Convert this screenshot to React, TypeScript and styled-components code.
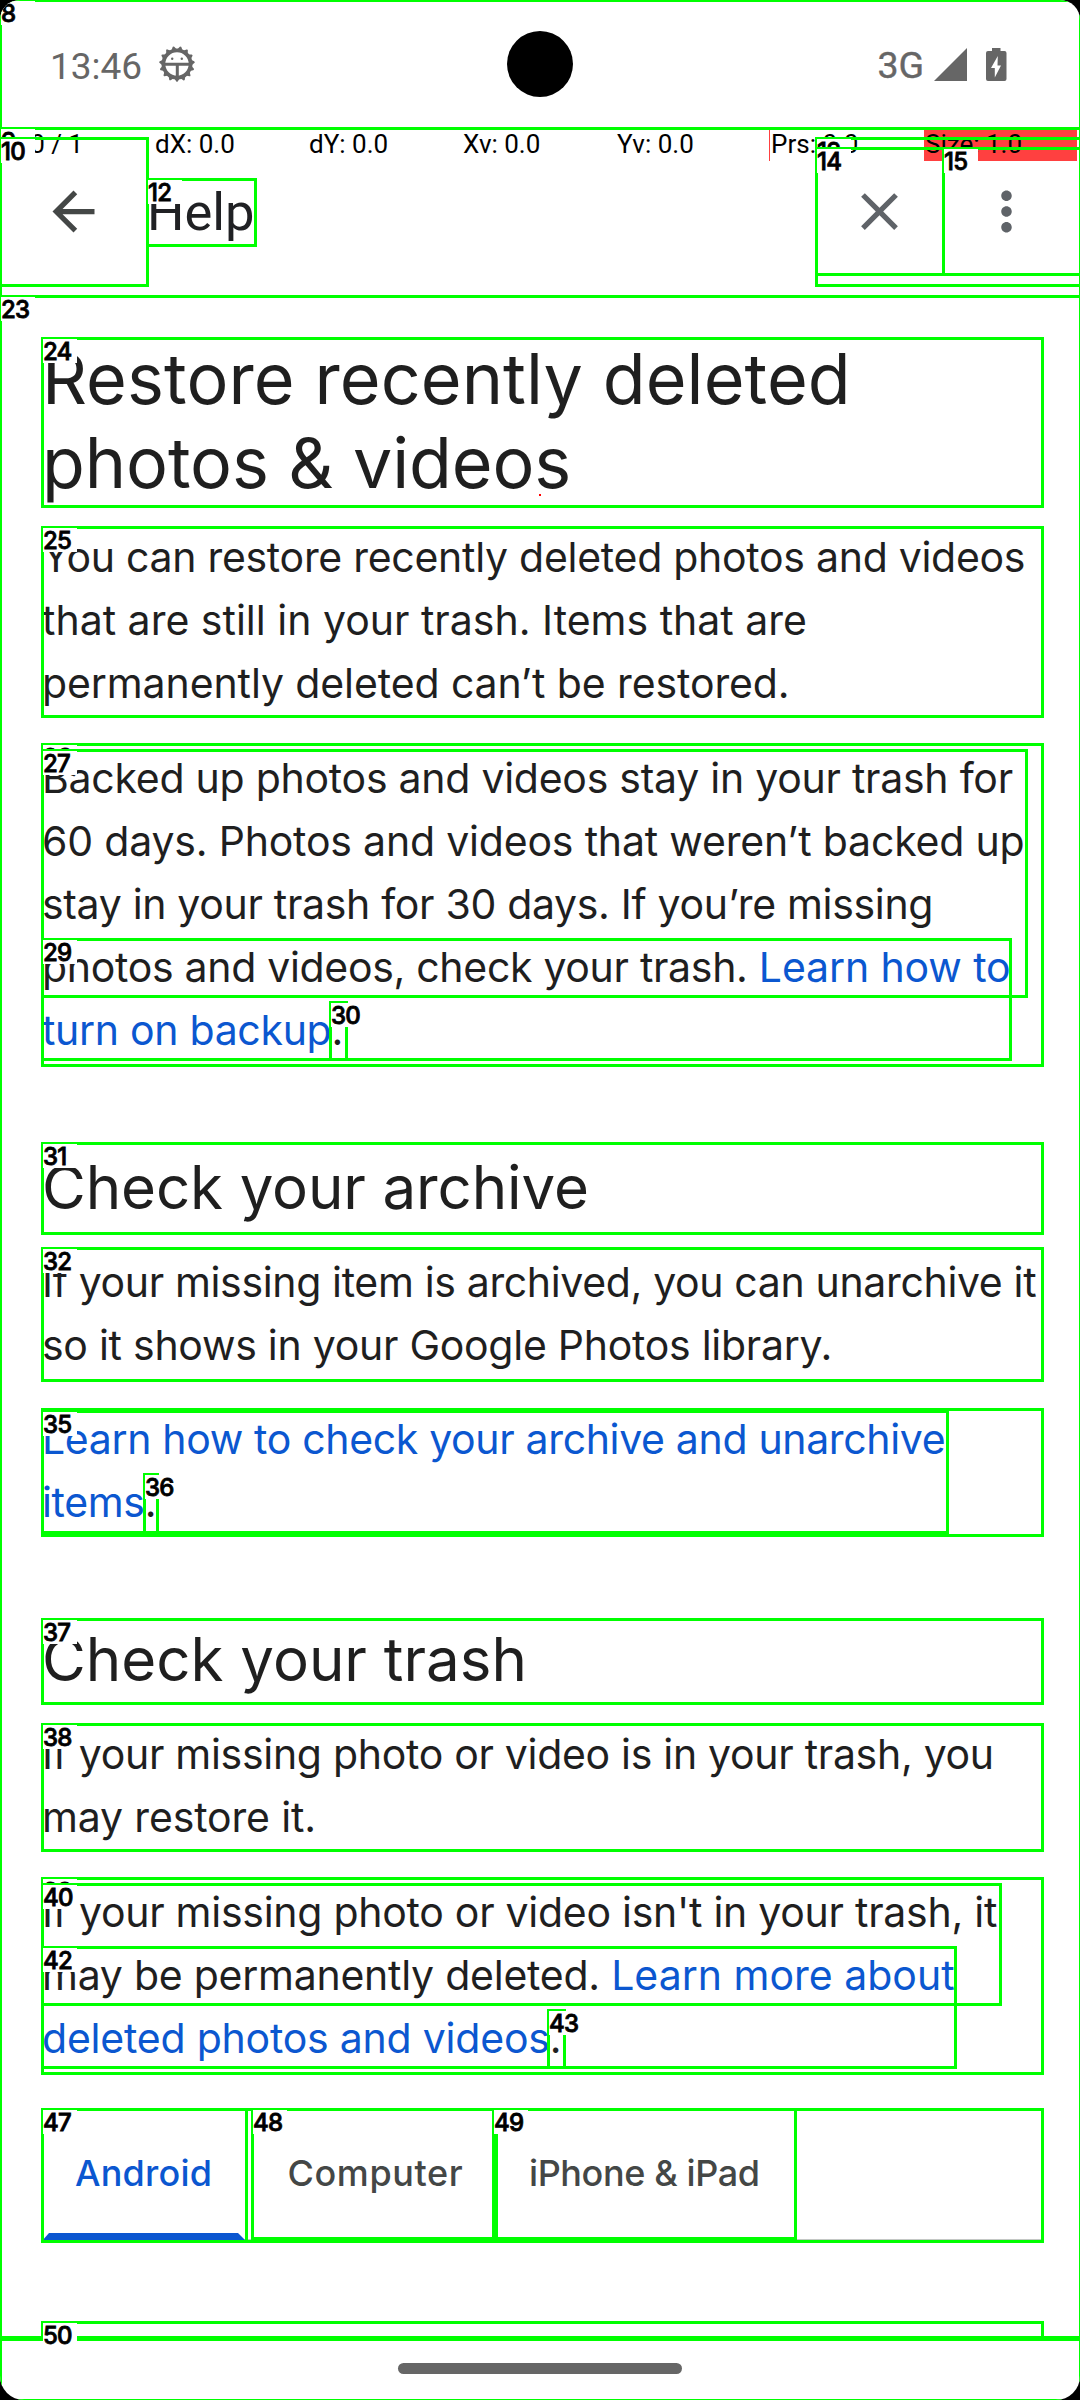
import React from "react";
import styled, { createGlobalStyle } from "styled-components";

const GlobalStyle = createGlobalStyle`
  * { box-sizing: border-box; }
  body { margin: 0; background: #000; }
  h1, h2, p { margin: 0; font-weight: 400; }
`;

const Phone = styled.div`
  position: relative;
  display: flex;
  flex-direction: column;
  width: 1080px;
  height: 2400px;
  overflow: hidden;
  background: #fff;
  border-radius: 20px 20px 24px 24px;
  font-family: Inter, "Open Sans", sans-serif;
  color: #1f1f1f;
`;

/* Status bar */
const StatusBar = styled.header`
  display: grid;
  flex: none;
  grid-template-columns: 1fr 66px 1fr;
  align-items: center;
  height: 128px;
  color: #666;
  font-family: Roboto, sans-serif;
`;

const StatusSide = styled.div<{ $end?: boolean }>`
  display: flex;
  justify-content: ${(p) => (p.$end ? "flex-end" : "flex-start")};
  padding: ${(p) => (p.$end ? "0 73px 0 0" : "0 0 0 50px")};
`;

const StatusGroup = styled.div<{ $gap: number }>`
  display: flex;
  align-items: center;
  gap: ${(p) => p.$gap}px;
`;

const Clock = styled.span`
  width: 92px;
  padding-top: 5px;
  font-size: 37px;
  line-height: 44px;
  white-space: nowrap;
`;

const Network = styled.span`
  padding-top: 2px;
  font-size: 37.5px;
  font-weight: 450;
  line-height: 44px;
  -webkit-text-stroke: 0.4px #666;
`;

const PunchHole = styled.div`
  width: 66px;
  height: 66px;
  border-radius: 50%;
  background: #000;
`;

/* Pointer read-out drawn over the top of the window */
const PointerBar = styled.div`
  position: absolute;
  top: 128px;
  left: 0;
  display: grid;
  grid-template-columns: repeat(7, 154px);
  height: 32px;
  color: #000;
  font-family: Roboto, sans-serif;
  font-size: 26px;
  line-height: 33px;
`;

const PointerCell = styled.span<{ $hot?: boolean; $edge?: boolean }>`
  width: ${(p) => (p.$hot ? 153 : 154)}px;
  padding-left: 1px;
  background: ${(p) => (p.$hot ? "#ff4040" : "transparent")};
  box-shadow: ${(p) => (p.$edge ? "-1px 0 0 #ff4040" : "none")};
  white-space: nowrap;
`;

/* App bar */
const AppBar = styled.div`
  display: flex;
  flex: none;
  align-items: center;
  height: 168px;
  padding: 0 10px 1px 0;
`;

const IconButton = styled.button<{ $width: number; $color: string }>`
  display: flex;
  align-items: center;
  justify-content: center;
  width: ${(p) => p.$width}px;
  height: 126px;
  padding: 0;
  border: 0;
  background: none;
  color: ${(p) => p.$color};
`;

const Title = styled.div`
  flex: 1;
  color: #202124;
  font-family: Roboto, sans-serif;
  font-size: 52.5px;
  line-height: 66px;
`;

/* Article */
const Article = styled.main`
  display: flex;
  flex: 1;
  flex-direction: column;
  min-height: 0;
  padding: 41px 38px 0 42px;
`;

const Heading = styled.h1`
  font-size: 70px;
  line-height: 84px;
`;

const SubHeading = styled.h2`
  margin-top: 83px;
  font-size: 60px;
  line-height: 84px;
`;

const Paragraph = styled.p<{ $top: number }>`
  margin-top: ${(p) => p.$top}px;
  font-size: 41px;
  line-height: 63px;
`;

const Line = styled.span<{ $track?: number }>`
  display: block;
  letter-spacing: ${(p) => p.$track ?? 0}px;
  white-space: pre;
`;

const Link = styled.a<{ $track?: number }>`
  color: #0b57d0;
  letter-spacing: ${(p) => p.$track ?? 0}px;
`;

const Tabs = styled.nav`
  display: flex;
  flex: none;
  height: 131px;
  margin-top: 39px;
  border-bottom: 1px solid #c4c7c5;
`;

const Tab = styled.div<{ $width: number; $pad: number; $track: number; $active?: boolean }>`
  display: flex;
  flex: none;
  flex-direction: column;
  width: ${(p) => p.$width}px;
  margin-right: ${(p) => (p.$active ? 6 : 0)}px;
  padding: 43px 0 0 ${(p) => p.$pad}px;
  color: ${(p) => (p.$active ? "#0b57d0" : "#444746")};
  font-size: 36px;
  font-weight: 500;
  letter-spacing: ${(p) => p.$track}px;
  line-height: 42px;
  white-space: nowrap;
`;

const TabIndicator = styled.i`
  flex: none;
  width: 204px;
  height: 8px;
  margin: 39px 0 0 -33px;
  background: #0b57d0;
  clip-path: polygon(7px 0, 196px 0, 100% 100%, 0 100%);
`;

const NavBar = styled.footer`
  display: flex;
  flex: none;
  justify-content: center;
  height: 62px;
  padding-top: 25px;
`;

const NavPill = styled.div`
  width: 284px;
  height: 11px;
  border-radius: 6px;
  background: #666;
`;

/* Numbered outlines over the interface */
const Outline = styled.div<{ $x: number; $y: number; $r: number; $b: number }>`
  position: absolute;
  left: ${(p) => p.$x - 1}px;
  top: ${(p) => p.$y - 1}px;
  width: ${(p) => p.$r - p.$x + 3}px;
  height: ${(p) => p.$b - p.$y + 3}px;
  border: 3px solid #0f0;
`;

const Tag = styled.span`
  position: absolute;
  left: -1px;
  top: -1px;
  width: 34px;
  height: 24px;
  background: #fff;
  color: #000;
  font-family: Inter, sans-serif;
  font-size: 24px;
  font-weight: 500;
  letter-spacing: -0.8px;
  line-height: 25px;
  white-space: nowrap;
  -webkit-text-stroke: 0.8px #000;
`;

const TouchDot = styled.i`
  position: absolute;
  left: 539px;
  top: 494px;
  width: 2px;
  height: 2px;
  background: #f00;
`;

type Mark = [label: number | null, x: number, y: number, r: number, b: number];

const marks: Mark[] = [
  [8, 0, 0, 1080, 2400],
  [9, 0, 128, 1080, 2339],
  [null, 0, 296, 1080, 2337],
  [10, 0, 138, 147, 285],
  [12, 147, 179, 255, 245],
  [13, 816, 138, 1082, 285],
  [14, 816, 148, 943, 274],
  [15, 943, 148, 1082, 274],
  [23, 0, 296, 1080, 2337],
  [24, 42, 338, 1042, 506],
  [25, 42, 527, 1042, 716],
  [26, 42, 744, 1042, 1065],
  [27, 42, 750, 1026, 996],
  [29, 42, 939, 1010, 1059],
  [30, 330, 1002, 346, 1059],
  [31, 42, 1143, 1042, 1233],
  [32, 42, 1248, 1042, 1380],
  [null, 42, 1409, 1042, 1535],
  [35, 42, 1411, 947, 1532],
  [36, 144, 1474, 157, 1532],
  [37, 42, 1619, 1042, 1703],
  [38, 42, 1724, 1042, 1850],
  [39, 42, 1878, 1042, 2073],
  [40, 42, 1884, 1000, 2004],
  [42, 42, 1947, 955, 2067],
  [43, 548, 2010, 564, 2067],
  [null, 42, 2109, 1042, 2241],
  [47, 42, 2109, 246, 2241],
  [48, 252, 2109, 496, 2238],
  [49, 493, 2109, 795, 2238],
  [50, 42, 2322, 1042, 2337],
];

const teeth = Array.from({ length: 15 }, (_, i) => (i * 24 * Math.PI) / 180);

function BugIcon() {
  return (
    <svg width="36" height="36" viewBox="-18 -18 36 36" fill="none" stroke="#666">
      <circle r="13.6" strokeWidth="3.8" />
      {teeth.map((a) => (
        <path
          key={a}
          d={`M${Math.sin(a - 0.13) * 14} ${Math.cos(a - 0.13) * 14}L${Math.sin(a) * 16.8} ${Math.cos(a) * 16.8}L${Math.sin(a + 0.13) * 14} ${Math.cos(a + 0.13) * 14}Z`}
          fill="#666"
          strokeWidth="2"
          strokeLinejoin="round"
        />
      ))}
      <path d="M-13 .3H13M.3 .3V13" strokeWidth="3" />
      <circle cx="-4.8" cy="-5.2" r="1.2" fill="#666" stroke="none" />
      <circle cx="4.8" cy="-5.2" r="1.2" fill="#666" stroke="none" />
    </svg>
  );
}

function SignalIcon() {
  return (
    <svg width="33" height="33" viewBox="0 0 33 33">
      <path d="M33 0V33H0z" fill="#666" />
    </svg>
  );
}

function BatteryIcon() {
  return (
    <svg width="21" height="33" viewBox="0 0 21 33">
      <path d="M6 0h8.500v3H18.500a2 2 0 0 1 2 2V31a2 2 0 0 1-2 2H2a2 2 0 0 1-2-2V5a2 2 0 0 1 2-2H6z" fill="#666" />
      <path d="M11.800 8L5 20h3.800v9.500L15 17.500h-3.500z" fill="#fff" />
    </svg>
  );
}

function Glyph({ d }: { d: string }) {
  return (
    <svg width="63" height="63" viewBox="0 0 24 24" fill="currentColor">
      <path d={d} />
    </svg>
  );
}

export default function App() {
  return (
    <>
      <GlobalStyle />
      <Phone>
        <StatusBar>
          <StatusSide>
            <StatusGroup $gap={17}>
              <Clock>13:46</Clock>
              <BugIcon />
            </StatusGroup>
          </StatusSide>
          <PunchHole />
          <StatusSide $end>
            <StatusGroup $gap={19}>
              <StatusGroup $gap={10}>
                <Network>3G</Network>
                <SignalIcon />
              </StatusGroup>
              <BatteryIcon />
            </StatusGroup>
          </StatusSide>
        </StatusBar>

        <AppBar>
          <IconButton $width={147} $color="#444746" aria-label="Back">
            <Glyph d="M20 11H7.830l5.590-5.590L12 4l-8 8 8 8 1.410-1.410L7.830 13H20v-2z" />
          </IconButton>
          <Title>Help</Title>
          <IconButton $width={127} $color="#5f6368" aria-label="Close">
            <Glyph d="M19 6.410L17.590 5 12 10.590 6.410 5 5 6.410 10.590 12 5 17.590 6.410 19 12 13.410 17.590 19 19 17.590 13.410 12z" />
          </IconButton>
          <IconButton $width={127} $color="#5f6368" aria-label="More options">
            <Glyph d="M12 8c1.100 0 2-.9 2-2s-.9-2-2-2-2 .9-2 2 .9 2 2 2zm0 2c-1.100 0-2 .9-2 2s.9 2 2 2 2-.9 2-2-.9-2-2-2zm0 6c-1.100 0-2 .9-2 2s.9 2 2 2 2-.9 2-2-.9-2-2-2z" />
          </IconButton>
        </AppBar>

        <Article>
          <Heading>
            <Line $track={0.1}>Restore recently deleted</Line>
            <Line $track={-0.1}>photos &amp; videos</Line>
          </Heading>
          <Paragraph $top={21}>
            <Line $track={-0.28}>You can restore recently deleted photos and videos</Line>
            <Line>that are still in your trash. Items that are</Line>
            <Line $track={-0.1}>permanently deleted can’t be restored.</Line>
          </Paragraph>
          <Paragraph $top={32}>
            <Line $track={-0.26}>Backed up photos and videos stay in your trash for</Line>
            <Line $track={-0.19}>60 days. Photos and videos that weren’t backed up</Line>
            <Line $track={-0.32}>stay in your trash for 30 days. If you’re missing</Line>
            <Line $track={-0.31}>
              photos and videos, check your trash. <Link $track={-0.12}>Learn how to</Link>
            </Line>
            <Line>
              <Link $track={-0.3}>turn on backup</Link>.
            </Line>
          </Paragraph>

          <SubHeading>
            <Line $track={-0.12}>Check your archive</Line>
          </SubHeading>
          <Paragraph $top={22}>
            <Line $track={-0.35}>If your missing item is archived, you can unarchive it</Line>
            <Line $track={-0.27}>so it shows in your Google Photos library.</Line>
          </Paragraph>
          <Paragraph $top={31}>
            <Line>
              <Link $track={-0.34}>Learn how to check your archive and unarchive</Link>
            </Line>
            <Line>
              <Link $track={-0.35}>items</Link>.
            </Line>
          </Paragraph>

          <SubHeading>
            <Line>Check your trash</Line>
          </SubHeading>
          <Paragraph $top={22}>
            <Line $track={-0.3}>If your missing photo or video is in your trash, you</Line>
            <Line $track={-0.15}>may restore it.</Line>
          </Paragraph>
          <Paragraph $top={32}>
            <Line $track={-0.27}>If your missing photo or video isn't in your trash, it</Line>
            <Line $track={-0.25}>
              may be permanently deleted. <Link>Learn more about</Link>
            </Line>
            <Line>
              <Link $track={-0.22}>deleted photos and videos</Link>.
            </Line>
          </Paragraph>

          <Tabs>
            <Tab $width={204} $pad={33} $track={0.2} $active>
              Android
              <TabIndicator />
            </Tab>
            <Tab $width={241} $pad={35.5} $track={0.6}>
              Computer
            </Tab>
            <Tab $width={302} $pad={36} $track={-0.4}>
              iPhone &amp; iPad
            </Tab>
          </Tabs>
        </Article>

        <NavBar>
          <NavPill />
        </NavBar>

        <PointerBar>
          <PointerCell>P: 0 / 1</PointerCell>
          <PointerCell>dX: 0.0</PointerCell>
          <PointerCell>dY: 0.0</PointerCell>
          <PointerCell>Xv: 0.0</PointerCell>
          <PointerCell>Yv: 0.0</PointerCell>
          <PointerCell $edge>Prs: 0.0</PointerCell>
          <PointerCell $hot>Size: 1.0</PointerCell>
        </PointerBar>
        <TouchDot />

        {marks.map(([label, x, y, r, b], i) => (
          <Outline key={i} $x={x} $y={y} $r={r} $b={b}>
            {label !== null && <Tag>{label}</Tag>}
          </Outline>
        ))}
      </Phone>
    </>
  );
}
